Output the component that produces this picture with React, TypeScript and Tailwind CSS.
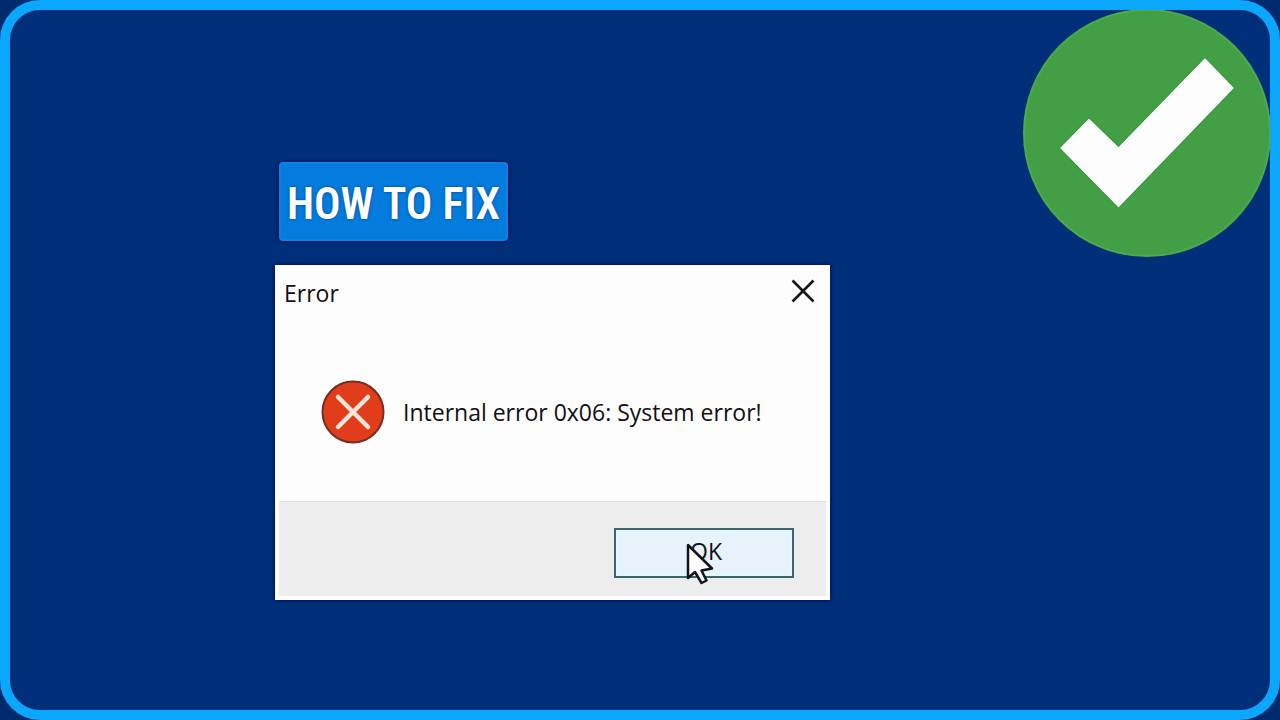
import { useState } from "react";

function CheckBadge() {
  return (
    <svg viewBox="0 0 248 248" className="absolute -top-px -right-px size-[248px]" role="img" aria-label="Solved">
      <circle cx="124" cy="124" r="123" fill="#439f45" stroke="#4bab4d" strokeWidth="2" />
      <path d="M37 139 66 109.500 95.500 138 182 49 211 79 95.500 198.500Z" fill="#fdfdfd" stroke="#238c29" strokeWidth="1.500" paintOrder="stroke" />
    </svg>
  );
}

function ErrorIcon() {
  return (
    <svg viewBox="0 0 64 64" className="size-16 shrink-0" aria-hidden="true">
      <circle cx="32" cy="32" r="30.500" fill="#e23d1b" stroke="#792d20" strokeWidth="2" />
      <path d="M17 17 47 47M47 17 17 47" stroke="#ffe6d8" strokeWidth="4.500" strokeLinecap="round" />
    </svg>
  );
}

function Cursor() {
  return (
    <svg viewBox="0 0 28 42" className="pointer-events-none absolute top-[15px] left-[72px] h-[42px] w-7" aria-hidden="true">
      <path d="M2 2V35L9 29 15.500 40 20.500 37.500 15.500 27.500 26 25.500Z" fill="#fff" stroke="#14141c" strokeWidth="2.500" strokeLinejoin="round" />
    </svg>
  );
}

function ErrorDialog({ onClose }: { onClose: () => void }) {
  return (
    <section
      role="dialog"
      aria-labelledby="dialog-title"
      className="w-[555px] max-w-full bg-[#fdfdfd] pb-1 font-['Open_Sans','Noto_Sans',sans-serif] text-[23px] text-[#101012] shadow-[0_0_4px_#000050]"
    >
      <header className="flex h-14 items-center justify-between pr-[15px] pl-[9px]">
        <h2 id="dialog-title">Error</h2>
        <button type="button" aria-label="Close" onClick={onClose} className="mb-1">
          <svg viewBox="0 0 24 24" className="size-6" aria-hidden="true">
            <path d="M1.500 1.500 22.500 22.500M22.500 1.500 1.500 22.500" stroke="#18181c" strokeWidth="2.600" />
          </svg>
        </button>
      </header>
      <div className="flex h-[180px] items-center gap-[18px] pt-0.5 pl-[46px]">
        <ErrorIcon />
        <p className="whitespace-nowrap">Internal error 0x06: System error!</p>
      </div>
      <footer className="mx-1 flex h-[95px] justify-end border-t border-[#e2e2e2] bg-[#ededed] pt-[26px] pr-8">
        <div className="relative h-[50px] w-[180px]">
          <button
            type="button"
            onClick={onClose}
            className="flex size-full items-center justify-center border-2 border-[#42636a] bg-[#e7f2fb] pb-1 pl-1 shadow-[0_0_3px_#d5ffff,inset_0_0_0_2px_#dcfaff]"
          >
            OK
          </button>
          <Cursor />
        </div>
      </footer>
    </section>
  );
}

export default function App() {
  const [open, setOpen] = useState(true);
  return (
    <div className="bg-[#002c6f]">
      <main className="relative min-h-screen overflow-hidden rounded-[40px] border-[10px] border-[#0aa7fc] bg-[#002f79] pt-[152px] pl-[265px]">
        <CheckBadge />
        <h1 className="ml-1 flex h-[79px] w-[229px] items-center justify-center rounded-sm border-2 border-[#0a84e4] bg-[#047cdd] pt-1 font-['Roboto_Condensed','Roboto',sans-serif] text-[44px] leading-none font-semibold whitespace-nowrap text-white shadow-[0_0_4px_#000050] text-shadow-[0_0_3px_#003f99]">
          HOW TO FIX
        </h1>
        <div className="pt-6">{open && <ErrorDialog onClose={() => setOpen(false)} />}</div>
      </main>
    </div>
  );
}
